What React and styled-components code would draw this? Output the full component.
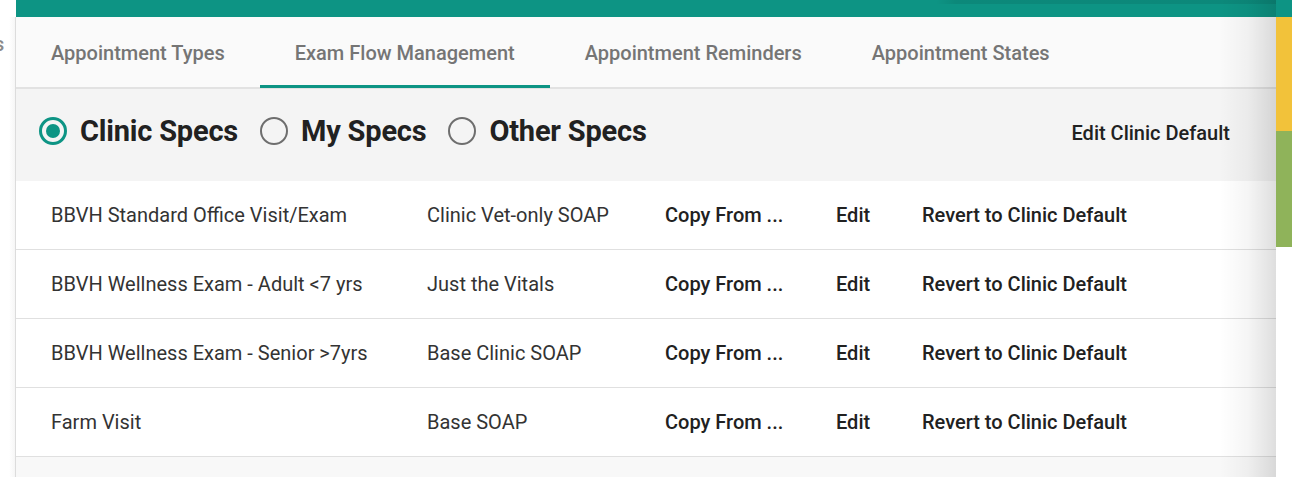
import React from "react";
import styled, { createGlobalStyle } from "styled-components";

const Global = createGlobalStyle`
  html, body { margin: 0; padding: 0; background: #ffffff; }
  body { font-family: Roboto, "Noto Sans", Arial, sans-serif; -webkit-font-smoothing: antialiased; }
  * { box-sizing: border-box; }
`;

const Page = styled.div`
  display: flex;
  width: 1292px;
  height: 477px;
  overflow: hidden;
  background: #ffffff;
`;

const LeftStrip = styled.div`
  width: 16px;
  flex: none;
  display: flex;
  flex-direction: column;
`;

const LeftTop = styled.div`
  height: 17px;
  background: #ffffff;
`;

const LeftBody = styled.div`
  flex: 1;
  border-right: 1px solid #dcdcdc;
  background: linear-gradient(90deg, #ffffff 0%, #ffffff 60%, #f6f6f6 100%);
  overflow: hidden;
  padding-top: 16px;
`;

const Cut = styled.span`
  display: block;
  margin-left: -6px;
  font-size: 20px;
  font-weight: 500;
  color: #8a8a8a;
  line-height: 22px;
`;

const Main = styled.div`
  position: relative;
  flex: 1;
  display: flex;
  flex-direction: column;
  background: #f8f8f8;
`;

const TopBar = styled.div`
  height: 17px;
  flex: none;
  background: #0d9484;
  background-image: linear-gradient(90deg, transparent 0, transparent 920px, rgba(0,0,0,0.08) 940px, rgba(0,0,0,0.08) 100%);
  background-size: 100% 4px;
  background-repeat: no-repeat;
`;

const Tabs = styled.div`
  display: flex;
  height: 72px;
  flex: none;
  background: #fafafa;
  border-bottom: 2px solid #e2e2e2;
`;

const Tab = styled.div`
  display: flex;
  align-items: center;
  padding: 3px 35px 0;
  font-size: 20px;
  font-weight: 500;
  color: #757575;
  border-bottom: 3px solid ${p => (p.$active ? "#0d9484" : "transparent")};
  margin-bottom: -1px;
  white-space: nowrap;
`;

const FilterBar = styled.div`
  height: 92px;
  flex: none;
  display: flex;
  align-items: center;
  justify-content: space-between;
  padding: 0 46px 8px 23px;
  background: #f4f4f4;
`;

const RadioGroup = styled.div`
  display: flex;
  align-items: center;
  gap: 22px;
`;

const RadioOption = styled.label`
  display: flex;
  align-items: center;
  gap: 13px;
  font-size: 29px;
  font-weight: 700;
  color: #212121;
  letter-spacing: -0.2px;
`;

const RadioCircle = styled.span`
  width: 28px;
  height: 28px;
  border-radius: 50%;
  border: ${p => (p.$checked ? "3px solid #0d9484" : "2.5px solid #6e6e6e")};
  display: flex;
  align-items: center;
  justify-content: center;
  &::after {
    content: "";
    width: 14px;
    height: 14px;
    border-radius: 50%;
    background: ${p => (p.$checked ? "#0d9484" : "transparent")};
  }
`;

const HeaderLink = styled.span`
  font-size: 20px;
  font-weight: 500;
  color: #212121;
  margin-top: 4px;
`;

const Table = styled.div`
  display: flex;
  flex-direction: column;
  background: #ffffff;
`;

const Row = styled.div`
  display: grid;
  grid-template-columns: 376px 238px 171px 86px 1fr;
  align-items: center;
  height: 69px;
  padding-left: 35px;
  border-bottom: 1px solid #e0e0e0;
  font-size: 20px;
`;

const Cell = styled.span`
  font-weight: ${p => (p.$action ? 500 : 400)};
  color: ${p => (p.$action ? "#212121" : "#333333")};
  white-space: nowrap;
`;

const Shade = styled.div`
  position: absolute;
  top: 0;
  right: 0;
  bottom: 0;
  width: 56px;
  pointer-events: none;
  background: linear-gradient(90deg, rgba(0,0,0,0) 0%, rgba(0,0,0,0.04) 50%, rgba(0,0,0,0.13) 100%);
`;

const RightStrip = styled.div`
  width: 16px;
  flex: none;
  display: flex;
  flex-direction: column;
`;

const Swatch = styled.div`
  height: ${p => p.$h}px;
  background: ${p => p.$c};
`;

const rows = [
  ["BBVH Standard Office Visit/Exam", "Clinic Vet-only SOAP"],
  ["BBVH Wellness Exam - Adult <7 yrs", "Just the Vitals"],
  ["BBVH Wellness Exam - Senior >7yrs", "Base Clinic SOAP"],
  ["Farm Visit", "Base SOAP"],
];

const tabs = ["Appointment Types", "Exam Flow Management", "Appointment Reminders", "Appointment States"];

export default function App() {
  return (
    <>
      <Global />
      <Page>
        <LeftStrip>
          <LeftTop />
          <LeftBody>
            <Cut>s</Cut>
          </LeftBody>
        </LeftStrip>
        <Main>
          <TopBar />
          <Tabs>
            {tabs.map((t, i) => (
              <Tab key={t} $active={i === 1}>{t}</Tab>
            ))}
          </Tabs>
          <FilterBar>
            <RadioGroup>
              <RadioOption><RadioCircle $checked />Clinic Specs</RadioOption>
              <RadioOption><RadioCircle />My Specs</RadioOption>
              <RadioOption><RadioCircle />Other Specs</RadioOption>
            </RadioGroup>
            <HeaderLink>Edit Clinic Default</HeaderLink>
          </FilterBar>
          <Table>
            {rows.map(([name, tpl]) => (
              <Row key={name}>
                <Cell>{name}</Cell>
                <Cell>{tpl}</Cell>
                <Cell $action>Copy From ...</Cell>
                <Cell $action>Edit</Cell>
                <Cell $action>Revert to Clinic Default</Cell>
              </Row>
            ))}
          </Table>
          <Shade />
        </Main>
        <RightStrip>
          <Swatch $h={17} $c="#0d9484" />
          <Swatch $h={114} $c="#f2c23a" />
          <Swatch $h={116} $c="#8fb35a" />
        </RightStrip>
      </Page>
    </>
  );
}
